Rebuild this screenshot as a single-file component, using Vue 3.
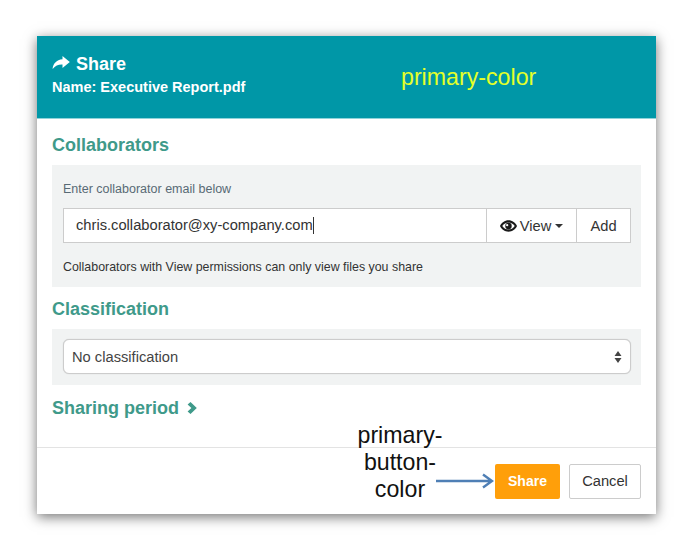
<script setup>
const email = 'chris.collaborator@xy-company.com'
</script>

<template>
  <div class="page">
    <div class="modal">
      <header class="head">
        <div class="title">
          <svg class="share" viewBox="0 0 18 14" width="18" height="14">
            <path d="M10.5 0 L17.8 6 L10.5 12 V8.6 C6.5 8.4 3.4 9.6 0.6 13 C0.8 8 4.5 3.6 10.5 3.2 Z" fill="#fff" />
          </svg>
          <span>Share</span>
        </div>
        <div class="name">Name: Executive Report.pdf</div>
        <div class="note-primary">primary-color</div>
      </header>

      <section class="body">
        <h3 class="sec first">Collaborators</h3>
        <div class="well well-a">
          <div class="label">Enter collaborator email below</div>
          <div class="group">
            <div class="input">{{ email }}<i class="caret"></i></div>
            <div class="btn view">
              <svg viewBox="0 0 18 12" width="17" height="12">
                <path fill="#1a1a1a" fill-rule="evenodd" d="M9 0 C13 0 16.5 2.6 18 6 C16.5 9.4 13 12 9 12 C5 12 1.5 9.4 0 6 C1.5 2.6 5 0 9 0 Z M9 2.2 C6.4 2.2 4 3.6 2.4 6 C4 8.4 6.4 9.8 9 9.8 C11.6 9.8 14 8.4 15.6 6 C14 3.6 11.6 2.2 9 2.2 Z M9 2.6 A3.4 3.4 0 1 1 9 9.4 A3.4 3.4 0 1 1 9 2.6 Z M7.6 3.9 A1.2 1.2 0 1 0 7.6 6.3 A1.2 1.2 0 1 0 7.6 3.9 Z" />
              </svg>
              <span>View</span>
              <i class="tri"></i>
            </div>
            <div class="btn add">Add</div>
          </div>
          <div class="help">Collaborators with View permissions can only view files you share</div>
        </div>

        <h3 class="sec">Classification</h3>
        <div class="well well-b">
          <div class="select">
            <span>No classification</span>
            <svg viewBox="0 0 8 14" width="8" height="14">
              <path d="M4 1 L7.5 6 H0.5 Z M0.5 8 H7.5 L4 13 Z" fill="#444" />
            </svg>
          </div>
        </div>

        <h3 class="sec period">
          <span>Sharing period</span>
          <svg viewBox="0 0 10 12" width="10" height="12">
            <path d="M3.5 0 L9.8 6 L3.5 12 L0.6 9.6 L4.4 6 L0.6 2.4 Z" fill="#3f9a8a" />
          </svg>
        </h3>
      </section>

      <footer class="foot">
        <div class="note-button">primary-<br />button-<br />color</div>
        <svg class="arrow" viewBox="0 0 58 16" width="58" height="16">
          <path d="M0 8 H56 M47 1.5 L56 8 L47 14.5" fill="none" stroke="#4f7fb5" stroke-width="2.4" />
        </svg>
        <div class="primary">Share</div>
        <div class="cancel">Cancel</div>
      </footer>
    </div>
  </div>
</template>

<style scoped>
.page {
  width: 690px;
  height: 550px;
  padding: 36px 0 0 37px;
  box-sizing: border-box;
  background: #fff;
  font-family: "Liberation Sans", Arial, sans-serif;
  overflow: hidden;
}
.modal {
  width: 619px;
  height: 478px;
  background: #fff;
  box-shadow: 0 3px 12px rgba(0, 0, 0, 0.55);
  display: flex;
  flex-direction: column;
}
.head {
  height: 83px;
  box-sizing: border-box;
  flex: none;
  background: #0097a7;
  border-bottom: 1px solid #8fd3da;
  padding: 17px 15px 0;
  color: #fff;
  position: relative;
}
.title {
  display: flex;
  align-items: center;
  gap: 6px;
  font-size: 18px;
  font-weight: 700;
  line-height: 22px;
}
.title .share { margin-top: -2px; }
.name {
  font-size: 14.5px;
  font-weight: 700;
  line-height: 17px;
  margin-top: 4px;
}
.note-primary {
  position: absolute;
  left: 364px;
  top: 27px;
  color: #e4ff2a;
  font-size: 23.2px;
  line-height: 28px;
}
.body {
  flex: 1;
  padding: 0 15px;
}
.sec {
  margin: 0;
  color: #3f9a8a;
  font-size: 18px;
  font-weight: 700;
  line-height: 22px;
  height: 22px;
}
.sec.first { margin-top: 15px; margin-bottom: 9px; }
.well {
  background: #f1f3f3;
}
.well-a {
  height: 122px;
  padding: 17px 10px 0 11px;
  box-sizing: border-box;
  margin-bottom: 11px;
}
.label {
  font-size: 12.5px;
  line-height: 14px;
  color: #586a75;
  margin-bottom: 12px;
}
.group {
  display: flex;
  height: 35px;
}
.input {
  flex: 1;
  background: #fff;
  border: 1px solid #ccc;
  box-sizing: border-box;
  font-size: 14.7px;
  line-height: 33px;
  padding-left: 12px;
  color: #333;
  display: flex;
  align-items: center;
}
.caret {
  display: block;
  width: 1px;
  height: 17px;
  background: #333;
}
.btn {
  background: #fff;
  border: 1px solid #ccc;
  border-left: 0;
  box-sizing: border-box;
  font-size: 14.7px;
  color: #333;
  display: flex;
  align-items: center;
  justify-content: center;
}
.view { width: 90px; gap: 3px; }
.add { width: 54px; }
.tri {
  display: block;
  width: 0;
  height: 0;
  border-left: 4px solid transparent;
  border-right: 4px solid transparent;
  border-top: 4px solid #333;
  margin: 1px 0 0 1px;
}
.help {
  font-size: 12.4px;
  line-height: 14px;
  color: #333;
  margin-top: 17px;
}
.sec + .well-b { margin-top: 9px; }
.well-b {
  height: 56px;
  padding: 10px 10px 10px 11px;
  box-sizing: border-box;
  margin-bottom: 12px;
}
.select {
  height: 35px;
  box-sizing: border-box;
  background: #fff;
  border: 1px solid #ccc;
  border-radius: 6px;
  box-shadow: 0 0 1px rgba(0, 0, 0, 0.2);
  padding: 0 8px 0 8px;
  display: flex;
  align-items: center;
  justify-content: space-between;
  font-size: 14.7px;
  color: #444;
}
.period {
  display: flex;
  align-items: center;
  gap: 8px;
}
.foot {
  height: 67px;
  flex: none;
  border-top: 1px solid #e3e3e3;
  box-sizing: border-box;
  position: relative;
  display: flex;
  align-items: center;
  justify-content: flex-end;
  padding: 0 15px 0 0;
  gap: 9px;
}
.note-button {
  position: absolute;
  left: 318px;
  top: -26px;
  width: 90px;
  text-align: center;
  font-size: 23.2px;
  line-height: 27px;
  color: #111;
}
.arrow {
  position: absolute;
  left: 399px;
  top: 25px;
}
.primary {
  width: 65px;
  height: 35px;
  background: #ff9f0a;
  border-radius: 2px;
  color: #fff;
  font-size: 14px;
  font-weight: 700;
  display: flex;
  align-items: center;
  justify-content: center;
}
.cancel {
  width: 72px;
  height: 35px;
  box-sizing: border-box;
  background: #fff;
  border: 1px solid #ccc;
  border-radius: 2px;
  color: #333;
  font-size: 14.7px;
  display: flex;
  align-items: center;
  justify-content: center;
}
</style>
